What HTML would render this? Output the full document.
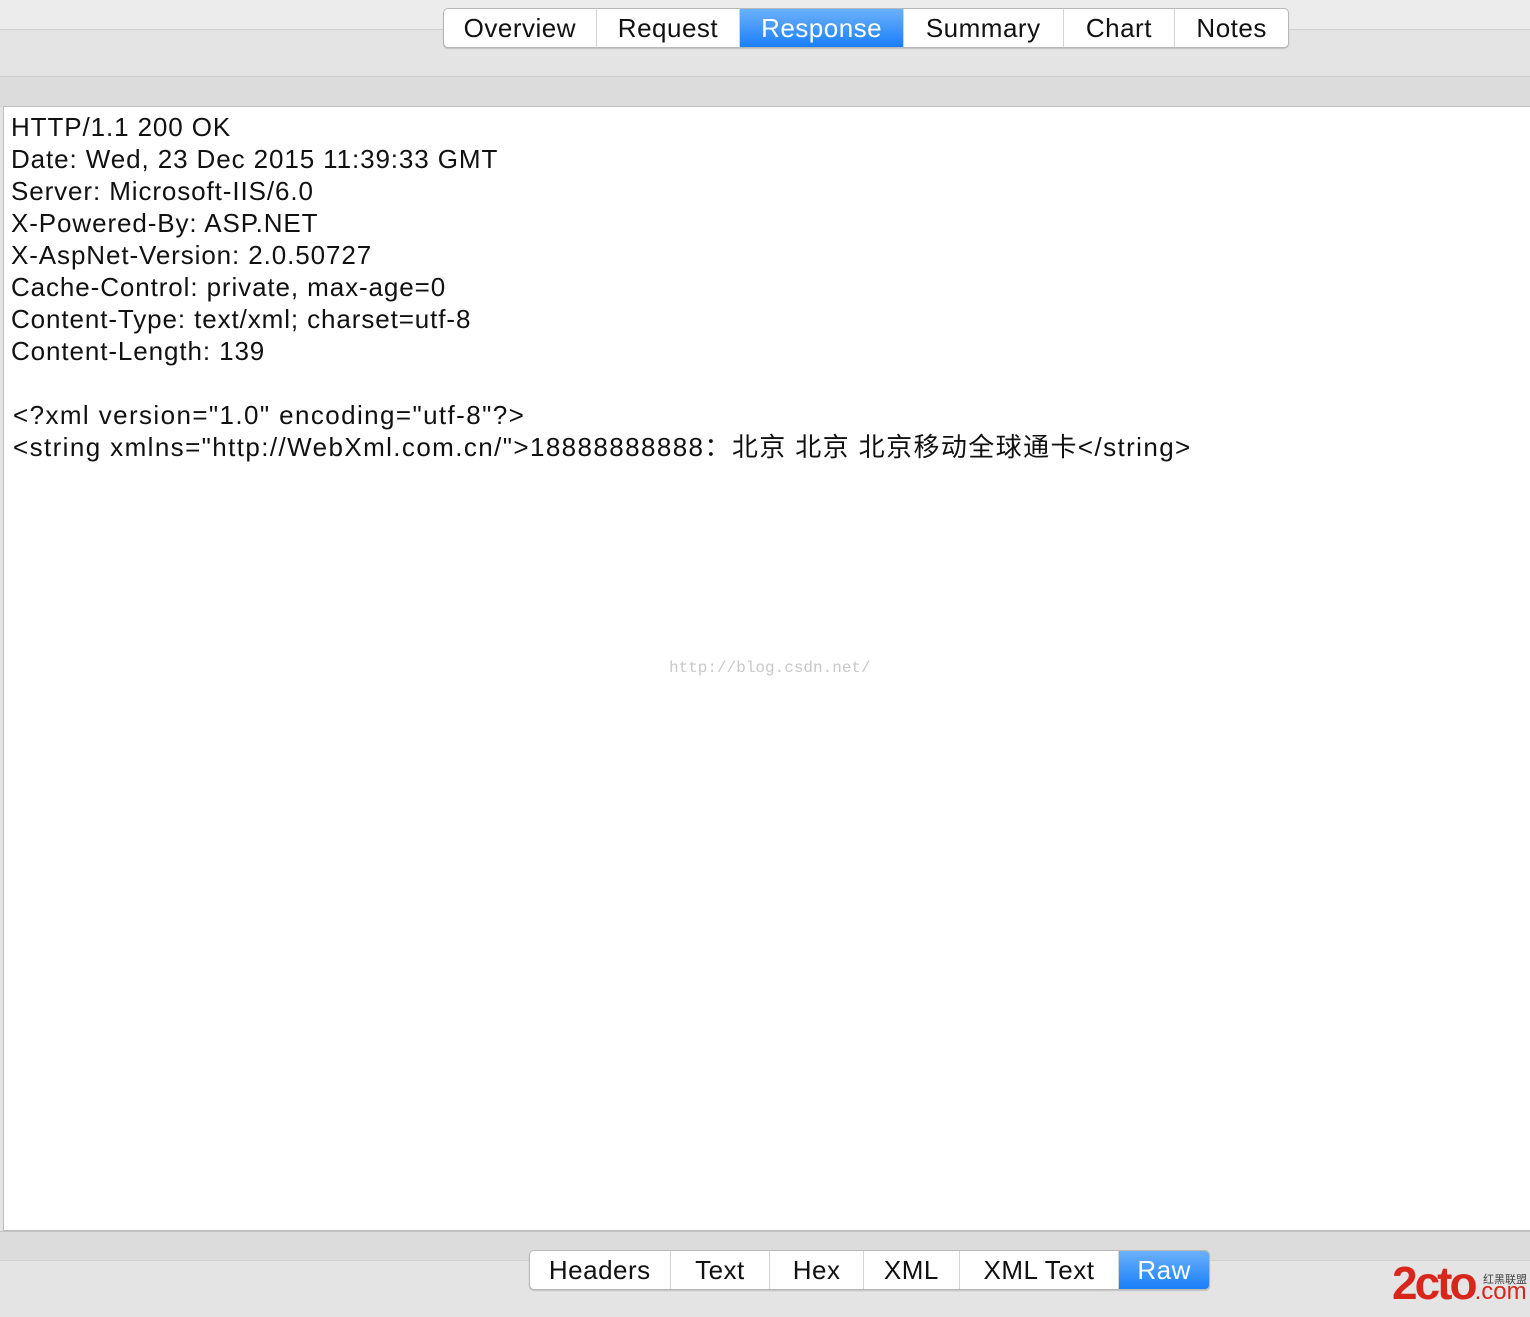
<!DOCTYPE html>
<html><head><meta charset="utf-8"><style>
*{margin:0;padding:0;box-sizing:border-box}
body{width:1530px;height:1310px;position:relative;background:#e4e4e4;font-family:"Liberation Sans","Noto Sans CJK SC",sans-serif;overflow:hidden}
.b{position:absolute;left:0;width:1530px}
.tabs{position:absolute;display:flex;height:40px;border:1px solid #b8b8b8;border-radius:5px;background:#fff;overflow:hidden;box-shadow:0 1px 1px rgba(0,0,0,.15)}
.tabs div{height:100%;display:flex;align-items:center;justify-content:center;font-size:26px;color:#111;border-right:1px solid #d4d4d4;letter-spacing:0.5px}
.tabs div:last-child{border-right:none}
.tabs .sel{background:linear-gradient(#6bb1fb,#1a7ff9);color:#fff}
#content{position:absolute;left:3px;top:106px;width:1530px;height:1125px;background:#fff;border:1px solid #bdbdbd;padding:4px 0 0 7px;font-size:26px;line-height:32px;color:#111;letter-spacing:0.9px}
</style></head><body>
<div class="b" style="top:0;height:30px;background:#ececec;border-bottom:1px solid #d0d0d0"></div>
<div class="b" style="top:76px;height:31px;background:#dcdcdc;border-top:1px solid #cfcfcf"></div>
<div class="tabs" style="left:443px;top:8px;width:846px">
<div style="width:153px">Overview</div><div style="width:144px">Request</div><div class="sel" style="width:164px">Response</div><div style="width:160px">Summary</div><div style="width:112px">Chart</div><div style="width:113px">Notes</div>
</div>
<div id="content">HTTP/1.1 200 OK<br>Date: Wed, 23 Dec 2015 11:39:33 GMT<br>Server: Microsoft-IIS/6.0<br>X-Powered-By: ASP.NET<br>X-AspNet-Version: 2.0.50727<br>Cache-Control: private, max-age=0<br>Content-Type: text/xml; charset=utf-8<br>Content-Length: 139<br><div style="height:32px"></div><div style="padding-left:2px;letter-spacing:1.4px">&lt;?xml version="1.0" encoding="utf-8"?&gt;<br>&lt;string xmlns="http://WebXml.com.cn/"&gt;18888888888：北京 北京 北京移动全球通卡&lt;/string&gt;</div>
<div style="position:absolute;left:665px;top:545px;font-family:'Liberation Mono',monospace;font-size:16px;letter-spacing:0;color:#c8c8c8">http://blog.csdn.net/</div>
</div>
<div class="b" style="top:1231px;height:30px;background:#dcdcdc;border-top:1px solid #c4c4c4;border-bottom:1px solid #d0d0d0"></div>
<div class="tabs" style="left:529px;top:1250px;width:681px">
<div style="width:141px">Headers</div><div style="width:100px">Text</div><div style="width:94px">Hex</div><div style="width:96px">XML</div><div style="width:160px">XML Text</div><div class="sel" style="width:90px">Raw</div>
</div>
<div style="position:absolute;left:1392px;top:1258px;color:#d9261c;font-size:46px;font-weight:bold;letter-spacing:-3px;line-height:50px">2cto<span style="font-size:24px;font-weight:normal;letter-spacing:0">.com</span></div>
<div style="position:absolute;left:1483px;top:1271px;color:#444;font-size:11px">红黑联盟</div>
</body></html>
